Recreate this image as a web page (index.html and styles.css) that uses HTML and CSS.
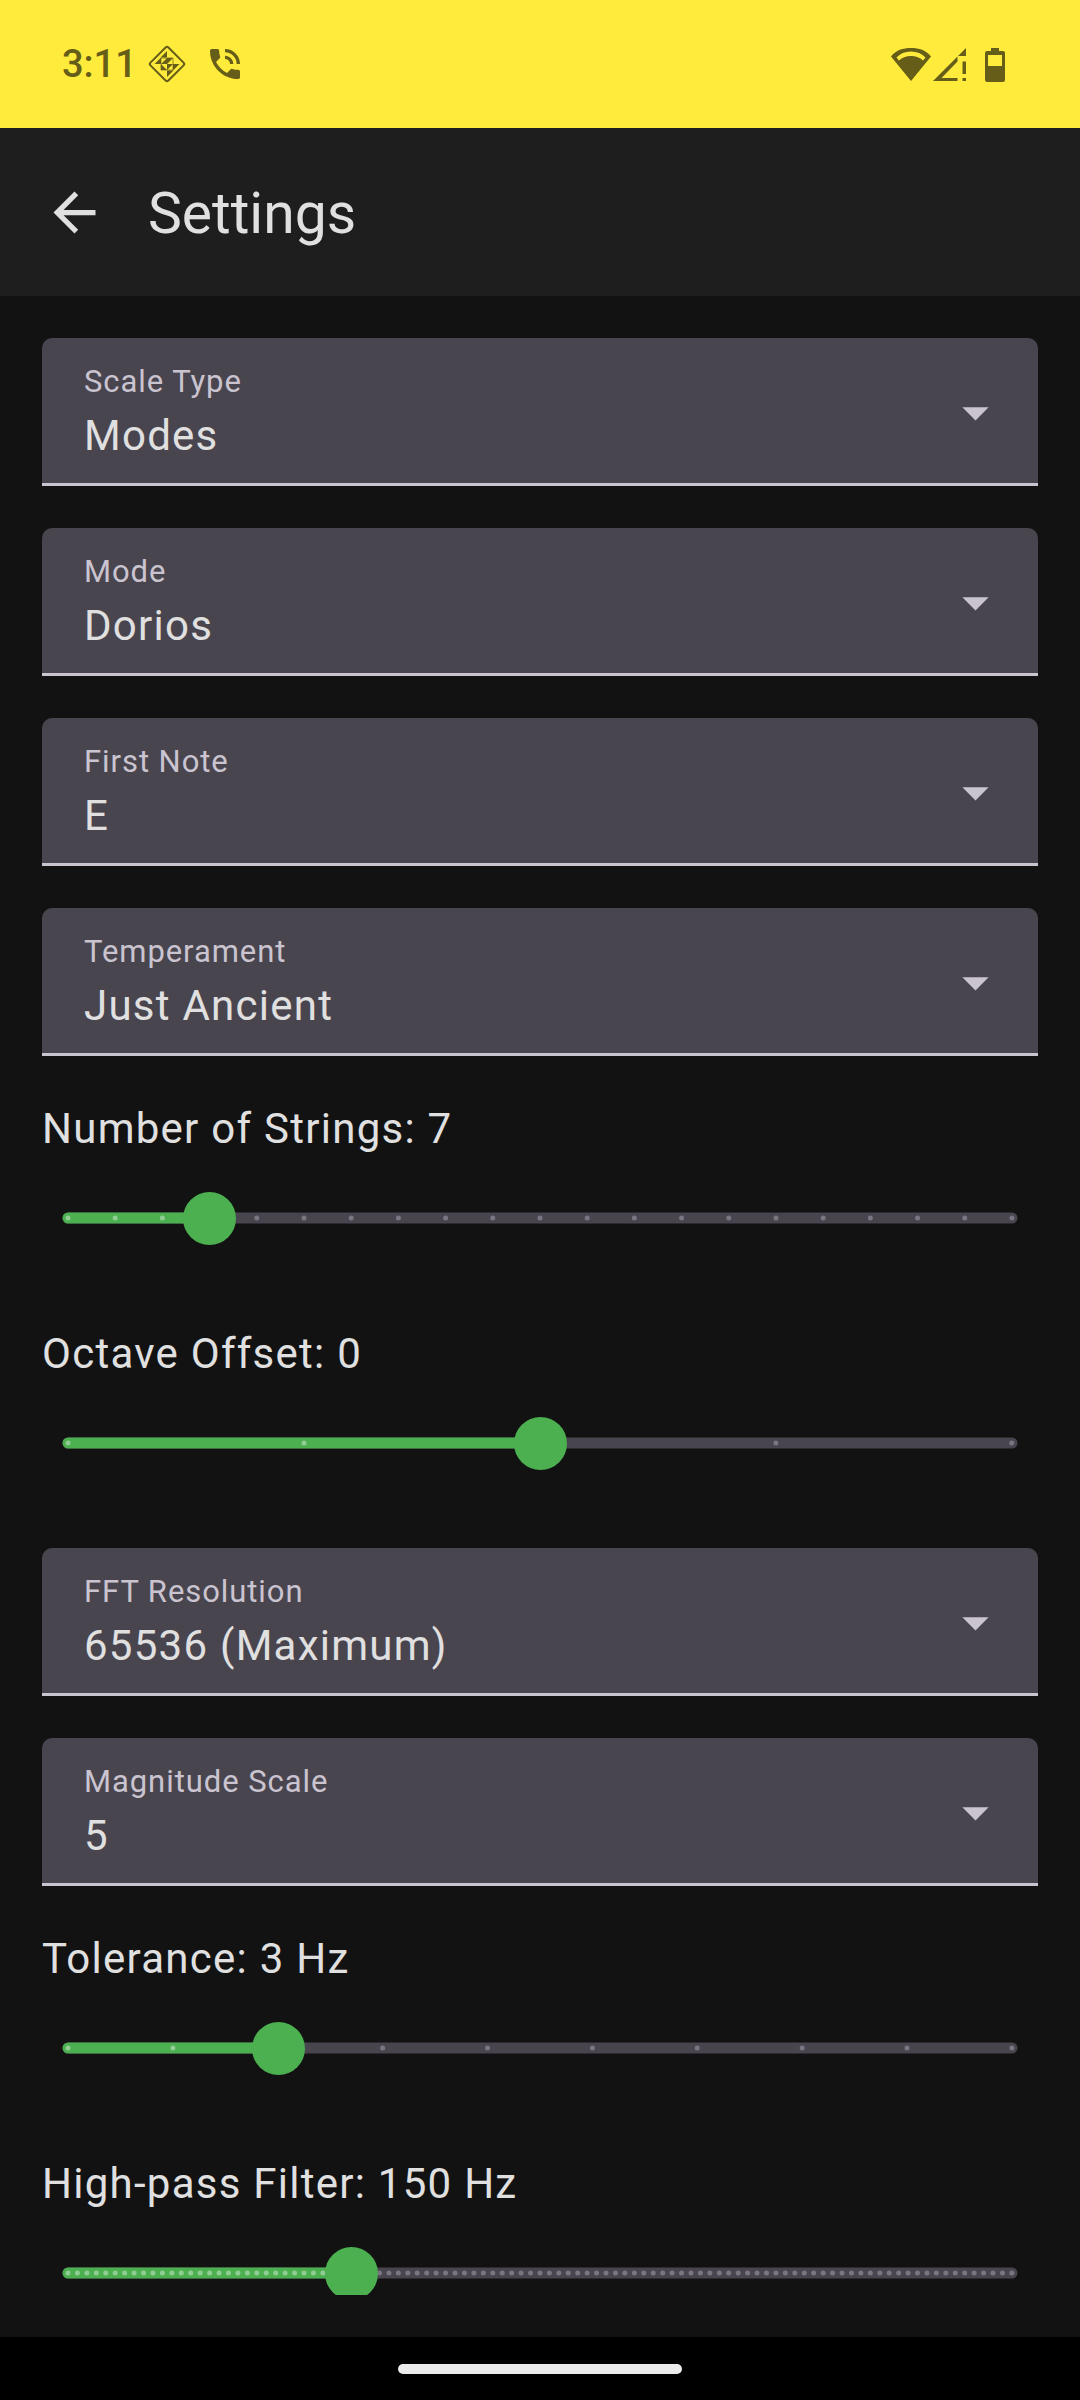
FILE: index.html
```html
<!DOCTYPE html>
<html lang="en">
<head>
<meta charset="utf-8">
<meta name="viewport" content="width=device-width, initial-scale=1">
<title>Settings</title>
<link rel="stylesheet" href="styles.css">
</head>
<body>
<div class="screen">
  <div class="status-bar">
    <div class="status-group">
      <span class="clock">3:11</span>
      <svg class="status-icon status-icon-app" viewBox="0 0 40 40" aria-hidden="true">
        <rect x="7.300" y="7.300" width="25.400" height="25.400" rx="2" fill="none" stroke="currentColor" stroke-width="2" transform="rotate(45 20 20)"/>
        <path fill="none" stroke="currentColor" stroke-width=".7" d="M14 14h12v12H14z"/>
        <path fill="currentColor" d="M20 7v6.500h-6.500zM7.500 20l6.500-6.500V20zM20 33v-6.500h6.500zM32.500 20L26 26.500V20zM20 14v6h-6zM20 26v-6h6zM20 14l6 0-6 6zM20 26h-6v-6z"/>
      </svg>
      <svg class="status-icon" viewBox="0 0 24 24" aria-hidden="true">
        <path fill="currentColor" d="M20 15.500c-1.250 0-2.450-.2-3.570-.57a1.020 1.020 0 0 0-1.020.24l-2.200 2.200a15.050 15.050 0 0 1-6.590-6.590l2.200-2.210a.96.96 0 0 0 .25-1A11.360 11.360 0 0 1 8.500 4c0-.55-.45-1-1-1H4c-.55 0-1 .45-1 1 0 9.390 7.610 17 17 17 .55 0 1-.45 1-1v-3.500c0-.55-.45-1-1-1zM19 12h2a9 9 0 0 0-9-9v2c3.870 0 7 3.130 7 7zm-4 0h2c0-2.760-2.240-5-5-5v2c1.660 0 3 1.340 3 3z"/>
      </svg>
    </div>
    <div class="status-group status-group-end">
      <svg class="status-icon" viewBox="0 0 40 40" aria-hidden="true">
        <path fill="currentColor" fill-rule="evenodd" d="M20 37L0 12.500C5 6 12 4 20 4s15 2 20 8.500zM5.500 13.500l2.500 3C11 13.500 15 12 20 12s9 1.500 12 4.500l2.500-3C31 9.500 26 7.500 20 7.500S9 9.500 5.500 13.500z"/>
      </svg>
      <svg class="status-icon" viewBox="0 0 40 40" aria-hidden="true">
        <path fill="currentColor" fill-rule="evenodd" d="M2 37L26.500 12.500v5L10.500 34h16v3zM27 12l8-8v8zM31.500 17.500H35V30h-3.500zM31.500 34H35v3h-3.500z"/>
      </svg>
      <svg class="status-icon" viewBox="0 0 40 40" aria-hidden="true">
        <path fill="currentColor" fill-rule="evenodd" d="M16 4h8v3h4a2 2 0 0 1 2 2v27a2 2 0 0 1-2 2H12a2 2 0 0 1-2-2V9a2 2 0 0 1 2-2h4zM13 11v11h14V11z"/>
      </svg>
    </div>
  </div>

  <header class="app-bar">
    <button class="back" type="button" aria-label="Back">
      <svg class="icon" viewBox="0 0 24 24" aria-hidden="true"><path fill="currentColor" d="M20 11H7.830l5.590-5.590L12 4l-8 8 8 8 1.410-1.410L7.830 13H20z"/></svg>
    </button>
    <h1 class="title">Settings</h1>
  </header>

  <main class="content">
    <div class="field">
      <label class="field-label" for="scale-type">Scale Type</label>
      <select class="field-select" id="scale-type"><option>Modes</option></select>
      <svg class="field-arrow icon" viewBox="0 0 24 24" aria-hidden="true"><path fill="currentColor" d="M7 10l5 5 5-5z"/></svg>
    </div>
    <div class="field">
      <label class="field-label" for="mode">Mode</label>
      <select class="field-select" id="mode"><option>Dorios</option></select>
      <svg class="field-arrow icon" viewBox="0 0 24 24" aria-hidden="true"><path fill="currentColor" d="M7 10l5 5 5-5z"/></svg>
    </div>
    <div class="field">
      <label class="field-label" for="first-note">First Note</label>
      <select class="field-select" id="first-note"><option>E</option></select>
      <svg class="field-arrow icon" viewBox="0 0 24 24" aria-hidden="true"><path fill="currentColor" d="M7 10l5 5 5-5z"/></svg>
    </div>
    <div class="field">
      <label class="field-label" for="temperament">Temperament</label>
      <select class="field-select" id="temperament"><option>Just Ancient</option></select>
      <svg class="field-arrow icon" viewBox="0 0 24 24" aria-hidden="true"><path fill="currentColor" d="M7 10l5 5 5-5z"/></svg>
    </div>

    <div class="setting">
      <label class="setting-label" for="strings">Number of Strings: 7</label>
      <div class="slider">
        <svg class="slider-track" aria-hidden="true">
          <line class="rail" x1="0" y1="50%" x2="100%" y2="50%"/>
          <line class="dots" x1="0" y1="50%" x2="100%" y2="50%" pathLength="20.001"/>
          <line class="rail rail-active" x1="0" y1="50%" x2="15%" y2="50%"/>
          <line class="dots dots-active" x1="0" y1="50%" x2="15%" y2="50%" pathLength="3"/>
        </svg>
        <input class="slider-input" id="strings" type="range" min="4" max="24" value="7">
      </div>
    </div>
    <div class="setting">
      <label class="setting-label" for="octave">Octave Offset: 0</label>
      <div class="slider">
        <svg class="slider-track" aria-hidden="true">
          <line class="rail" x1="0" y1="50%" x2="100%" y2="50%"/>
          <line class="dots" x1="0" y1="50%" x2="100%" y2="50%" pathLength="4.001"/>
          <line class="rail rail-active" x1="0" y1="50%" x2="50%" y2="50%"/>
          <line class="dots dots-active" x1="0" y1="50%" x2="50%" y2="50%" pathLength="2"/>
        </svg>
        <input class="slider-input" id="octave" type="range" min="-2" max="2" value="0">
      </div>
    </div>

    <div class="field">
      <label class="field-label" for="fft">FFT Resolution</label>
      <select class="field-select" id="fft"><option>65536 (Maximum)</option></select>
      <svg class="field-arrow icon" viewBox="0 0 24 24" aria-hidden="true"><path fill="currentColor" d="M7 10l5 5 5-5z"/></svg>
    </div>
    <div class="field">
      <label class="field-label" for="magnitude">Magnitude Scale</label>
      <select class="field-select" id="magnitude"><option>5</option></select>
      <svg class="field-arrow icon" viewBox="0 0 24 24" aria-hidden="true"><path fill="currentColor" d="M7 10l5 5 5-5z"/></svg>
    </div>

    <div class="setting">
      <label class="setting-label" for="tolerance">Tolerance: 3 Hz</label>
      <div class="slider">
        <svg class="slider-track" aria-hidden="true">
          <line class="rail" x1="0" y1="50%" x2="100%" y2="50%"/>
          <line class="dots" x1="0" y1="50%" x2="100%" y2="50%" pathLength="9.001"/>
          <line class="rail rail-active" x1="0" y1="50%" x2="22.222%" y2="50%"/>
          <line class="dots dots-active" x1="0" y1="50%" x2="22.222%" y2="50%" pathLength="2"/>
        </svg>
        <input class="slider-input" id="tolerance" type="range" min="1" max="10" value="3">
      </div>
    </div>
    <div class="setting">
      <label class="setting-label" for="high-pass">High-pass Filter: 150 Hz</label>
      <div class="slider">
        <svg class="slider-track" aria-hidden="true">
          <line class="rail" x1="0" y1="50%" x2="100%" y2="50%"/>
          <line class="dots" x1="0" y1="50%" x2="100%" y2="50%" pathLength="100.010"/>
          <line class="rail rail-active" x1="0" y1="50%" x2="30%" y2="50%"/>
          <line class="dots dots-active" x1="0" y1="50%" x2="30%" y2="50%" pathLength="30"/>
        </svg>
        <input class="slider-input" id="high-pass" type="range" min="0" max="500" step="5" value="150">
      </div>
    </div>
  </main>

  <div class="nav-bar"><div class="nav-handle"></div></div>
</div>
</body>
</html>
```

FILE: styles.css
```css
* {
  box-sizing: border-box;
}

body {
  margin: 0;
  background: #121212;
  color: #e0e0e0;
  font-family: Roboto, "Liberation Sans", sans-serif;
  font-size: 42px;
  line-height: 63px;
}

.screen {
  display: flex;
  flex-direction: column;
  height: 100vh;
}

.status-bar {
  display: flex;
  flex: none;
  align-items: center;
  justify-content: space-between;
  height: 128px;
  padding: 0 65px 0 62px;
  background: #ffeb3b;
  color: #665e18;
}

.status-group {
  display: flex;
  align-items: center;
  gap: 18px;
}

.status-group-end {
  gap: 0;
}

.status-group-end .status-icon:last-child {
  margin-left: 4px;
}

.clock {
  font-size: 38px;
  font-weight: 500;
}

.status-icon {
  display: block;
  width: 40px;
  height: 40px;
}

.status-icon-app {
  margin-left: -8px;
}

.app-bar {
  display: flex;
  flex: none;
  align-items: center;
  gap: 42px;
  height: 168px;
  padding: 0 43px;
  background: #1e1e1e;
}

.back {
  display: block;
  padding: 0;
  border: 0;
  background: none;
  color: inherit;
}

.icon {
  display: block;
  width: 63px;
  height: 63px;
}

.title {
  margin: 0;
  padding-top: 3px;
  font-size: 57px;
  font-weight: 400;
  line-height: 74px;
}

.content {
  display: flex;
  flex: 1;
  flex-direction: column;
  gap: 42px;
  min-height: 0;
  margin: 42px;
  overflow-y: auto;
  scrollbar-width: none;
}

.field {
  display: grid;
  flex: none;
  align-items: center;
}

.field > * {
  grid-area: 1 / 1;
}

.field-label {
  z-index: 1;
  align-self: start;
  padding: 23px 42px 0;
  color: #cac4d0;
  font-size: 31px;
  line-height: 42px;
  letter-spacing: 0.03em;
  pointer-events: none;
}

.field-select {
  width: 100%;
  padding: 66px 105px 16px 42px;
  border: 0;
  border-bottom: 3px solid #cac4d0;
  border-radius: 10px 10px 0 0;
  appearance: none;
  background: #49454f;
  color: inherit;
  font: inherit;
  letter-spacing: 0.03em;
}

.field-arrow {
  z-index: 1;
  justify-self: end;
  margin-right: 31px;
  color: #cac4d0;
  pointer-events: none;
}

.setting {
  flex: none;
}

.setting-label {
  display: block;
  line-height: 61px;
  letter-spacing: 0.03em;
}

.slider {
  display: grid;
  grid-template-rows: minmax(0, 1fr);
  height: 122px;
  padding-bottom: 4px;
}

.slider > * {
  grid-area: 1 / 1;
}

.slider-track {
  justify-self: center;
  width: calc(100% - 52px);
  height: 100%;
  overflow: visible;
}

.rail {
  stroke: #49454f;
  stroke-width: 11px;
  stroke-linecap: round;
}

.rail-active {
  stroke: #4caf50;
}

.dots {
  stroke: #7a7580;
  stroke-width: 5px;
  stroke-linecap: round;
  stroke-dasharray: 0 1;
}

.dots-active {
  stroke: #90cd93;
}

.slider-input {
  width: 100%;
  height: 100%;
  margin: 0;
  appearance: none;
  background: none;
}

.slider-input::-webkit-slider-thumb {
  width: 53px;
  height: 53px;
  border: 0;
  border-radius: 50%;
  appearance: none;
  background: #4caf50;
}

.nav-bar {
  display: grid;
  flex: none;
  place-items: center;
  height: 63px;
  background: #000;
}

.nav-handle {
  width: 284px;
  height: 10px;
  border-radius: 5px;
  background: #ebebeb;
}
```
